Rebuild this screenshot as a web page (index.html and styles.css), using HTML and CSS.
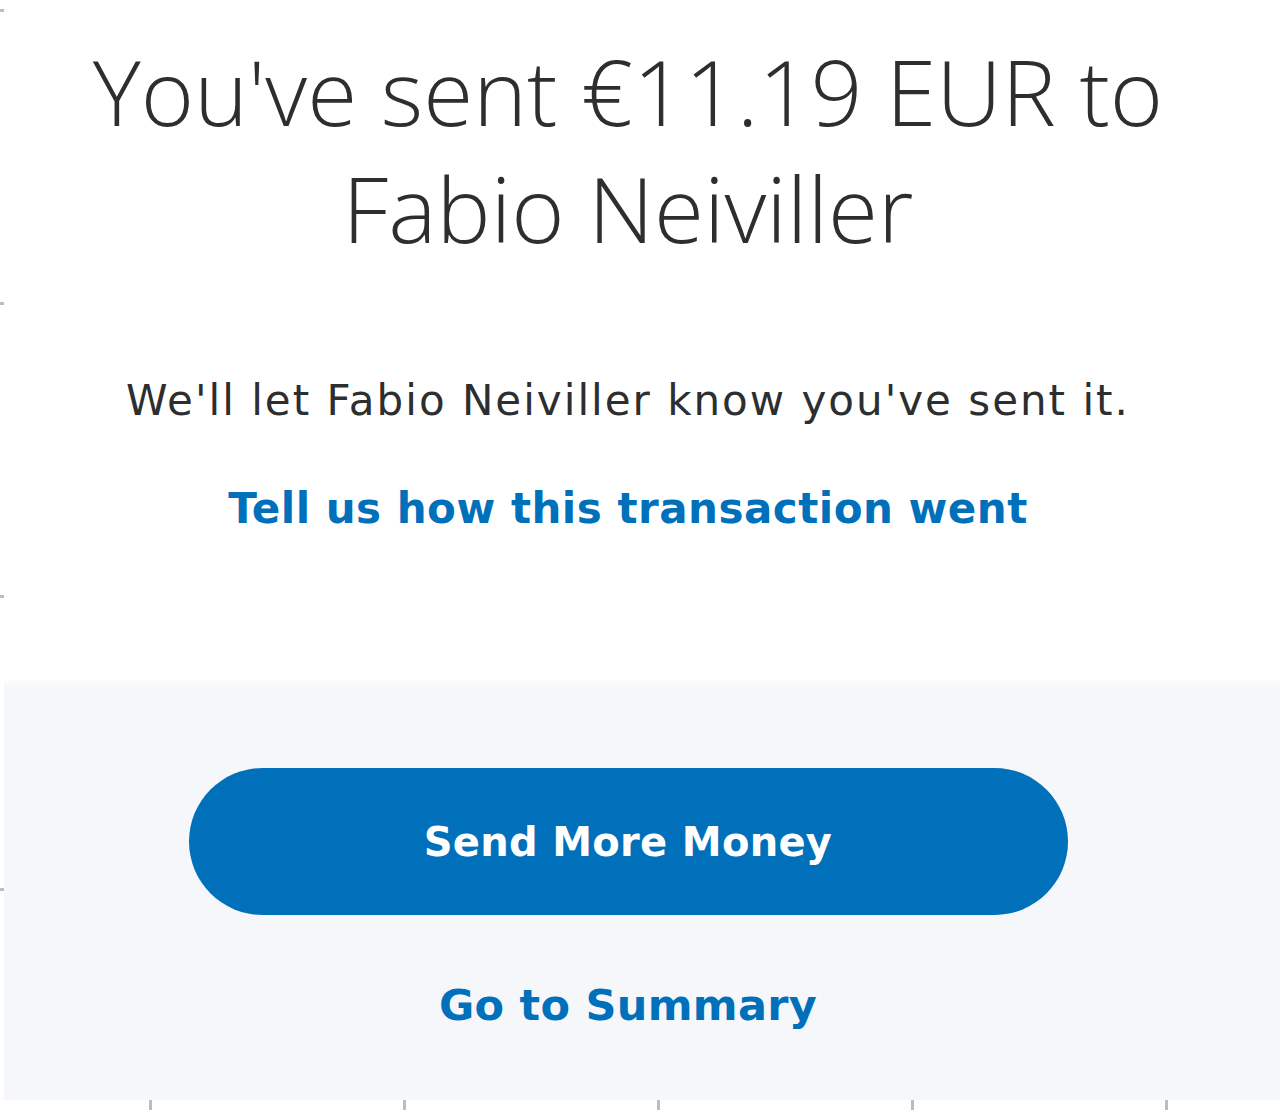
FILE: index.html
```html
<!DOCTYPE html>
<html lang="en">
<head>
<meta charset="utf-8">
<title>Payment sent</title>
<link rel="stylesheet" href="styles.css">
</head>
<body>
<div class="frame">
  <div class="ticks-left">
    <span class="tick-h"></span>
    <span class="tick-h"></span>
    <span class="tick-h"></span>
    <span class="tick-h"></span>
  </div>
  <main class="content">
    <section class="top">
      <h1 class="title">You've sent €11.19 EUR to Fabio Neiviller</h1>
      <p class="note">We'll let Fabio Neiviller know you've sent it.</p>
      <a class="link feedback" href="#">Tell us how this transaction went</a>
    </section>
    <section class="actions">
      <a class="btn-primary" href="#">Send More Money</a>
      <a class="link summary" href="#">Go to Summary</a>
    </section>
  </main>
</div>
<div class="ticks-bottom">
  <span class="tick-v"></span>
  <span class="tick-v"></span>
  <span class="tick-v"></span>
  <span class="tick-v"></span>
  <span class="tick-v"></span>
</div>
</body>
</html>
```

FILE: styles.css
```css
html, body {
  margin: 0;
  padding: 0;
  background: #ffffff;
}
body {
  width: 1280px;
  height: 1110px;
  overflow: hidden;
  font-family: "DejaVu Sans", "Noto Sans", sans-serif;
  color: #2c2e2f;
}
.frame {
  display: flex;
  height: 1100px;
}
.ticks-left {
  width: 4px;
  flex: none;
  display: flex;
  flex-direction: column;
  padding-top: 9px;
  gap: 290px;
}
.tick-h {
  display: block;
  width: 4px;
  height: 3px;
  background: #bdbdbd;
}
.content {
  flex: 1;
  display: flex;
  flex-direction: column;
}
.top {
  height: 680px;
  display: flex;
  flex-direction: column;
  align-items: center;
  margin-left: -4px;
  padding-right: 24px;
}
.title {
  margin: 33px 0 0;
  width: 1130px;
  text-align: center;
  font-family: "Open Sans", sans-serif;
  font-weight: 300;
  font-size: 91px;
  line-height: 117px;
  color: #2c2e2f;
}
.note {
  margin: 104px 0 0;
  font-size: 42px;
  line-height: 60px;
  letter-spacing: 2px;
  color: #2c2e2f;
}
.link {
  font-weight: bold;
  color: #0070ba;
  text-decoration: none;
  font-size: 42px;
  line-height: 60px;
  letter-spacing: 0.5px;
}
.feedback {
  margin-top: 48px;
}
.actions {
  flex: 1;
  background: linear-gradient(#fbfcfd, #f5f7fa 8px);
  display: flex;
  flex-direction: column;
  align-items: center;
  padding-top: 88px;
  padding-right: 28px;
}
.btn-primary {
  width: 879px;
  height: 147px;
  border-radius: 74px;
  background: #0070ba;
  color: #ffffff;
  font-weight: bold;
  font-size: 40px;
  letter-spacing: 0.3px;
  text-decoration: none;
  display: flex;
  align-items: center;
  justify-content: center;
}
.summary {
  margin-top: 60px;
  font-size: 43px;
  letter-spacing: 0.3px;
}
.ticks-bottom {
  height: 10px;
  display: flex;
  padding-left: 149px;
  gap: 251px;
}
.tick-v {
  display: block;
  width: 3px;
  height: 10px;
  background: #bdbdbd;
}
```
